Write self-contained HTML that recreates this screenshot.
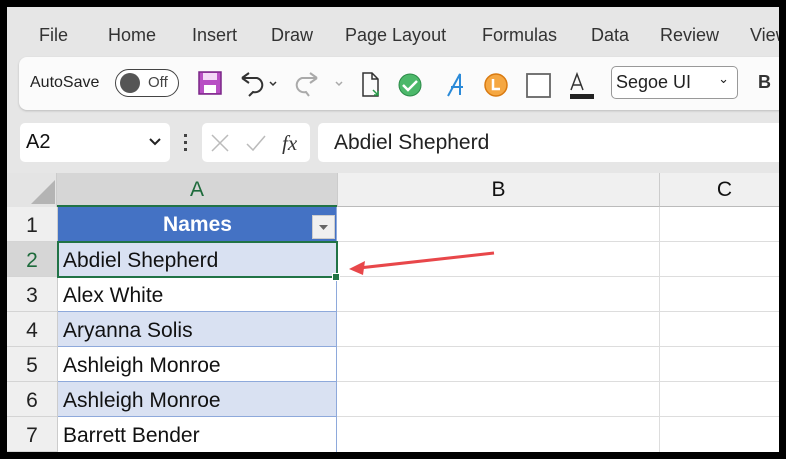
<!DOCTYPE html>
<html><head><meta charset="utf-8"><style>
*{margin:0;padding:0;box-sizing:border-box}
body{width:786px;height:459px;background:#000;position:relative;overflow:hidden;font-family:"Liberation Sans",sans-serif}
.a{position:absolute}
#app{left:7px;top:7px;width:772px;height:445px;background:#e6e6e6;overflow:hidden}
.m{top:18px;font-size:18px;color:#333}
.cell{position:absolute;font-size:21px;color:#111;padding-left:5px;line-height:37px}
.rh{position:absolute;left:0;width:50px;text-align:center;font-size:21px;color:#222;line-height:37px;background:#efefef;border-bottom:1px solid #d4d4d4}
</style></head><body>
<div id="app" class="a">
<div class="a m" style="left:32px">File</div>
<div class="a m" style="left:101px">Home</div>
<div class="a m" style="left:185px">Insert</div>
<div class="a m" style="left:264px">Draw</div>
<div class="a m" style="left:338px">Page Layout</div>
<div class="a m" style="left:475px">Formulas</div>
<div class="a m" style="left:584px">Data</div>
<div class="a m" style="left:653px">Review</div>
<div class="a m" style="left:743px">View</div>
<div class="a" style="left:12px;top:50px;width:780px;height:53px;background:#fbfbfb;border-radius:8px;box-shadow:0 1px 2px #bbb"></div>
<div class="a" style="left:23px;top:67px;font-size:16px;color:#222">AutoSave</div>
<div class="a" style="left:108px;top:62px;width:64px;height:28px;border:1.5px solid #444;border-radius:14px;background:#fff"></div>
<div class="a" style="left:113px;top:66px;width:20px;height:20px;border-radius:50%;background:#555"></div>
<div class="a" style="left:141px;top:67px;font-size:15px;color:#444">Off</div>
<svg class="a" style="left:190px;top:63px" width="300" height="30">
<rect x="2" y="2" width="22" height="22" fill="#b84fc4" stroke="#7a2687" stroke-width="1.5"/><rect x="6" y="3" width="14" height="7" fill="#f3d8f6"/><rect x="7" y="15" width="12" height="8" fill="#fff"/>
<path d="M45 8 L52 3 M45 8 L52 13 M45 8 H60 A7 7 0 0 1 56 22 L52 26" fill="none" stroke="#333" stroke-width="2"/>
<path d="M73 12 l3 3 l3 -3" fill="none" stroke="#333" stroke-width="1.5"/>
<path d="M120 8 L113 3 M120 8 L113 13 M120 8 H105 A7 7 0 0 0 109 22 L112 26" fill="none" stroke="#aaa" stroke-width="2"/>
<path d="M139 12 l3 3 l3 -3" fill="none" stroke="#aaa" stroke-width="1.5"/>
<path d="M166 3 h9 l6 6 v17 h-15z M175 3 v6 h6" fill="none" stroke="#333" stroke-width="1.5"/><path d="M176 20 l5 5 m0 -4 v4 h-4" stroke="#2a9a4a" stroke-width="1.5" fill="none"/>
<circle cx="213" cy="15" r="11" fill="#4cb86a" stroke="#2b8a48"/><path d="M206 15 l5 5 l9 -9" stroke="#fff" stroke-width="2.5" fill="none"/>
</svg>
<svg class="a" style="left:430px;top:63px" width="200" height="32">
<path d="M11 26 L23 4 L23 25 M14 17 H26" fill="none" stroke="#2b8ad8" stroke-width="2"/>
<circle cx="59" cy="15" r="11" fill="#f5a742" stroke="#d97a10" stroke-width="1.5"/><path d="M56 9 v10 h7" stroke="#fff" stroke-width="2.5" fill="none"/>
<rect x="90" y="4" width="23" height="23" fill="#fff" stroke="#666" stroke-width="1.8"/>
<path d="M134 20 L140 4 L146 20 M136 15 H144" fill="none" stroke="#333" stroke-width="1.5"/><rect x="133" y="24" width="24" height="5" fill="#222"/>
</svg>
<div class="a" style="left:604px;top:59px;width:127px;height:33px;border:1px solid #999;border-radius:5px;background:#fff;font-size:18px;padding:5px 0 0 4px;color:#222">Segoe UI<span style="position:absolute;right:8px;top:4px;font-size:13px">&#8964;</span></div>
<div class="a" style="left:751px;top:65px;font-size:18px;font-weight:bold;color:#333">B</div>
<div class="a" style="left:13px;top:116px;width:150px;height:39px;background:#fff;border-radius:5px;font-size:20px;padding:8px 0 0 6px;color:#111">A2
<svg class="a" style="left:129px;top:15px" width="12" height="8"><path d="M1 1 l5 5 l5 -5" stroke="#222" stroke-width="2" fill="none"/></svg></div>
<div class="a" style="left:177px;top:127px;width:3px;height:3px;background:#444;box-shadow:0 7px #444,0 14px #444"></div>
<div class="a" style="left:195px;top:116px;width:108px;height:39px;background:#fff;border-radius:5px"></div>
<svg class="a" style="left:202px;top:125px" width="100" height="22"><path d="M3 3 L19 19 M19 3 L3 19" stroke="#bbb" stroke-width="1.5"/><path d="M38 12 l6 6 l12 -14" stroke="#bbb" stroke-width="1.5" fill="none"/><text x="73" y="18" font-family="Liberation Serif" font-style="italic" font-size="21" fill="#333">fx</text></svg>
<div class="a" style="left:311px;top:116px;width:470px;height:39px;background:#fff;border-radius:5px 0 0 5px;font-size:21px;padding:8px 0 0 16px;color:#222">Abdiel Shepherd</div>
<div class="a" style="left:0;top:166px;width:772px;height:279px;background:#fff"></div>
<div class="a" style="left:0;top:166px;width:50px;height:34px;background:#e4e4e4;border-right:1px solid #ccc"></div>
<svg class="a" style="left:20px;top:170px" width="30" height="30"><path d="M28 3 V27 H4z" fill="#b4b4b4"/></svg>
<div class="a" style="left:50px;top:166px;width:280px;height:34px;background:#d6d6d6;border-bottom:2px solid #217346;text-align:center;font-size:21px;line-height:34px;color:#1e6b3c">A</div>
<div class="a" style="left:330px;top:166px;width:322px;height:34px;background:#f0f0f0;border-bottom:1px solid #bbb;border-left:1px solid #ccc;text-align:center;font-size:21px;line-height:34px;color:#111">B</div>
<div class="a" style="left:652px;top:166px;width:130px;height:34px;background:#f0f0f0;border-bottom:1px solid #bbb;border-left:1px solid #ccc;text-align:center;font-size:21px;line-height:34px;color:#111">C</div>
<div class="rh" style="top:200px;height:35px">1</div>
<div class="rh" style="top:235px;height:35px;background:#d6d6d6;color:#1e6b3c">2</div>
<div class="rh" style="top:270px;height:35px">3</div>
<div class="rh" style="top:305px;height:35px">4</div>
<div class="rh" style="top:340px;height:35px">5</div>
<div class="rh" style="top:375px;height:35px">6</div>
<div class="rh" style="top:410px;height:35px">7</div>
<div class="a" style="left:50px;top:200px;width:1px;height:245px;background:#ccc"></div>
<div class="a" style="left:330px;top:234px;width:450px;height:1px;background:#ddd"></div>
<div class="a" style="left:330px;top:269px;width:450px;height:1px;background:#ddd"></div>
<div class="a" style="left:330px;top:304px;width:450px;height:1px;background:#ddd"></div>
<div class="a" style="left:330px;top:339px;width:450px;height:1px;background:#ddd"></div>
<div class="a" style="left:330px;top:374px;width:450px;height:1px;background:#ddd"></div>
<div class="a" style="left:330px;top:409px;width:450px;height:1px;background:#ddd"></div>
<div class="a" style="left:652px;top:200px;width:1px;height:245px;background:#ddd"></div>
<div class="cell" style="left:51px;top:200px;width:279px;height:35px;background:#4472c4;color:#fff;font-weight:bold;text-align:center;padding:0;line-height:35px">Names</div>
<div class="a" style="left:305px;top:208px;width:23px;height:24px;background:#f0f0f0;border:1px solid #ccc"></div>
<svg class="a" style="left:312px;top:218px" width="10" height="6"><path d="M0 0 h9 l-4.5 5z" fill="#666"/></svg>
<div class="cell" style="left:51px;top:235px;width:279px;height:35px;background:#d9e1f2">Abdiel Shepherd</div>
<div class="cell" style="left:51px;top:270px;width:279px;height:35px;background:#fff;border-bottom:1px solid #8ea9db">Alex White</div>
<div class="cell" style="left:51px;top:305px;width:279px;height:35px;background:#d9e1f2;border-bottom:1px solid #8ea9db">Aryanna Solis</div>
<div class="cell" style="left:51px;top:340px;width:279px;height:35px;background:#fff;border-bottom:1px solid #8ea9db">Ashleigh Monroe</div>
<div class="cell" style="left:51px;top:375px;width:279px;height:35px;background:#d9e1f2;border-bottom:1px solid #8ea9db">Ashleigh Monroe</div>
<div class="cell" style="left:51px;top:410px;width:279px;height:35px;background:#fff">Barrett Bender</div>
<div class="a" style="left:329px;top:200px;width:1px;height:245px;background:#8ea9db"></div>
<div class="a" style="left:50px;top:234px;width:281px;height:37px;border:2px solid #217346"></div>
<div class="a" style="left:326px;top:267px;width:6px;height:6px;background:#217346;outline:1px solid #fff"></div>
<svg class="a" style="left:330px;top:238px" width="170" height="40"><path d="M157 8 L22 23" stroke="#e8474a" stroke-width="3"/><path d="M12 24 L28 16 L26 30z" fill="#e8474a"/></svg>
</div>
</body></html>
